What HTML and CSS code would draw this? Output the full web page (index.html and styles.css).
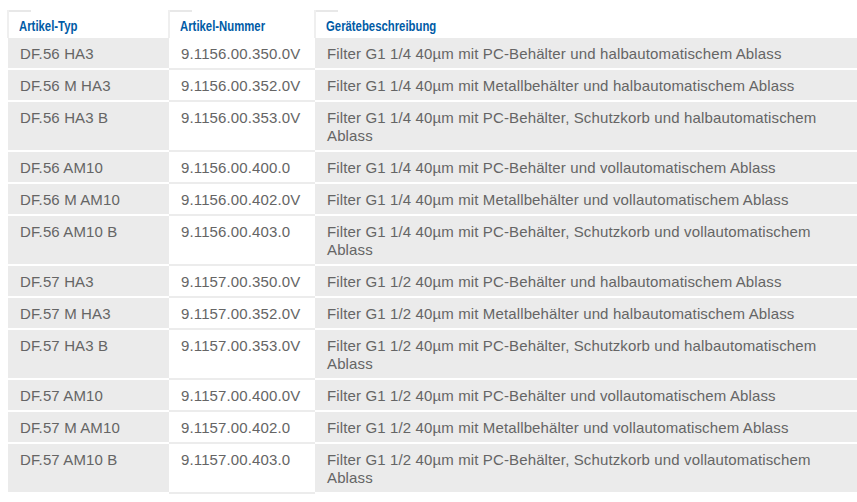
FILE: index.html
```html
<!DOCTYPE html>
<html lang="de">
<head>
<meta charset="utf-8">
<title>Filter</title>
<link rel="stylesheet" href="styles.css">
</head>
<body>
<table class="parts">
  <colgroup>
    <col class="c-typ">
    <col class="c-nr">
    <col class="c-desc">
  </colgroup>
  <thead>
    <tr>
      <th><span class="hd">Artikel-Typ</span></th>
      <th><span class="hd">Artikel-Nummer</span></th>
      <th><span class="hd">Gerätebeschreibung</span></th>
    </tr>
  </thead>
  <tbody>
    <tr><td>DF.56 HA3</td><td>9.1156.00.350.0V</td><td>Filter G1 1/4 40µm mit PC-Behälter und halbautomatischem Ablass</td></tr>
    <tr><td>DF.56 M HA3</td><td>9.1156.00.352.0V</td><td>Filter G1 1/4 40µm mit Metallbehälter und halbautomatischem Ablass</td></tr>
    <tr><td>DF.56 HA3 B</td><td>9.1156.00.353.0V</td><td>Filter G1 1/4 40µm mit PC-Behälter, Schutzkorb und halbautomatischem Ablass</td></tr>
    <tr><td>DF.56 AM10</td><td>9.1156.00.400.0</td><td>Filter G1 1/4 40µm mit PC-Behälter und vollautomatischem Ablass</td></tr>
    <tr><td>DF.56 M AM10</td><td>9.1156.00.402.0V</td><td>Filter G1 1/4 40µm mit Metallbehälter und vollautomatischem Ablass</td></tr>
    <tr><td>DF.56 AM10 B</td><td>9.1156.00.403.0</td><td>Filter G1 1/4 40µm mit PC-Behälter, Schutzkorb und vollautomatischem Ablass</td></tr>
    <tr><td>DF.57 HA3</td><td>9.1157.00.350.0V</td><td>Filter G1 1/2 40µm mit PC-Behälter und halbautomatischem Ablass</td></tr>
    <tr><td>DF.57 M HA3</td><td>9.1157.00.352.0V</td><td>Filter G1 1/2 40µm mit Metallbehälter und halbautomatischem Ablass</td></tr>
    <tr><td>DF.57 HA3 B</td><td>9.1157.00.353.0V</td><td>Filter G1 1/2 40µm mit PC-Behälter, Schutzkorb und halbautomatischem Ablass</td></tr>
    <tr><td>DF.57 AM10</td><td>9.1157.00.400.0V</td><td>Filter G1 1/2 40µm mit PC-Behälter und vollautomatischem Ablass</td></tr>
    <tr><td>DF.57 M AM10</td><td>9.1157.00.402.0</td><td>Filter G1 1/2 40µm mit Metallbehälter und vollautomatischem Ablass</td></tr>
    <tr><td>DF.57 AM10 B</td><td>9.1157.00.403.0</td><td>Filter G1 1/2 40µm mit PC-Behälter, Schutzkorb und vollautomatischem Ablass</td></tr>
  </tbody>
</table>
</body>
</html>
```
FILE: styles.css
```css
html, body {
  margin: 0;
  padding: 0;
  background: #ffffff;
}

body {
  padding: 10px 1px 0 7px;
  font-family: "Liberation Sans", Arial, sans-serif;
}

.parts {
  border-collapse: collapse;
  border-spacing: 0;
  table-layout: fixed;
  width: 849px;
}

.c-typ { width: 161px; }
.c-nr { width: 146px; }
.c-desc { width: 542px; }

.parts th {
  height: 28px;
  box-sizing: border-box;
  padding: 3px 10px 0 10px;
  text-align: left;
  vertical-align: middle;
  white-space: nowrap;
  font-family: "Liberation Sans", Arial, sans-serif;
  font-weight: bold;
  font-size: 14px;
  color: #005ba6;
  background:
    linear-gradient(#e8e8e8, #e8e8e8) no-repeat 0 0 / 22px 2px,
    #ffffff;
  border-left: 2px solid #efefef;
}

.hd {
  display: inline-block;
  transform: scaleX(0.81);
  transform-origin: 0 50%;
}

.parts td {
  padding: 7px 12px 5px 12px;
  vertical-align: top;
  font-size: 15px;
  letter-spacing: 0.13px;
  line-height: 18px;
  color: #656565;
  background: #ebebeb;
  border-bottom: 2px solid #ffffff;
}

.parts td:nth-child(2) {
  background: #ffffff;
  border-bottom: 2px solid #ececec;
}
```
